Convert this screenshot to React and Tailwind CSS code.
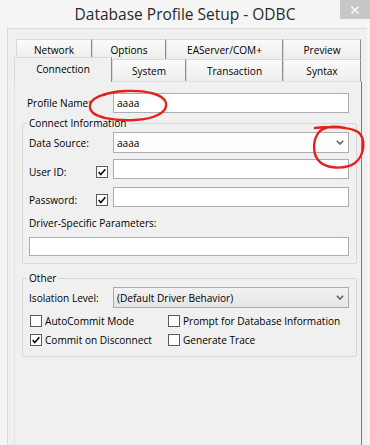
// Database Profile Setup — ODBC connection tab, Windows 8 dialog look.

const ROW1 = [
  ['Network', 'w-[76px]'],
  ['Options', 'w-[74px]'],
  ['EAServer/COM+', 'w-[117px]'],
  ['Preview', 'w-[78px]'],
]

const ROW2 = [
  ['System', 'w-[74px]'],
  ['Transaction', 'w-[97px]'],
  ['Syntax', 'w-[78px]'],
]

function Tab({ label, width }) {
  return (
    <div
      className={`${width} flex h-full items-center justify-center border-l border-t border-[#d9d9d9] border-r border-r-[#8c8c8c] bg-gradient-to-b from-[#fbfbfb] to-[#ededed]`}
    >
      {label}
    </div>
  )
}

function Check({ checked }) {
  return (
    <span className="flex h-[12px] w-[12px] flex-shrink-0 items-center justify-center border border-[#5a5a5a] bg-white">
      {checked && (
        <svg viewBox="0 0 12 12" className="h-[10px] w-[10px]" fill="none">
          <path d="M2 6.2 L4.6 9 L10 2.6" stroke="#111" strokeWidth="2" />
        </svg>
      )}
    </span>
  )
}

function Chevron() {
  return (
    <svg viewBox="0 0 8 5" className="h-[5px] w-[8px]" fill="none">
      <path d="M0.8 0.8 L4 4 L7.2 0.8" stroke="#5a5a5a" strokeWidth="1.5" />
    </svg>
  )
}

function TextBox({ value, className = 'w-[236px] h-[20px]' }) {
  return (
    <div className={`${className} flex items-center border border-[#abadb3] bg-white pl-[3px]`}>
      {value}
    </div>
  )
}

function Combo({ value, gray }) {
  return (
    <div
      className={`flex h-[21px] w-[236px] items-center justify-between border border-[#acacac] pl-[3px] pr-[4px] ${
        gray ? 'bg-gradient-to-b from-[#f2f2f2] to-[#e5e5e5]' : 'bg-[#fdfdfd]'
      }`}
    >
      <span>{value}</span>
      <Chevron />
    </div>
  )
}

function CheckLabel({ checked, children, className = '' }) {
  return (
    <div className={`flex items-center gap-[3px] ${className}`}>
      <Check checked={checked} />
      <span>{children}</span>
    </div>
  )
}

export default function App() {
  return (
    <div className="relative h-[445px] w-[370px] overflow-hidden bg-[#f5f5f5] font-['Open_Sans','Noto_Sans',sans-serif] text-[10.1px] leading-[14px] text-black">
      {/* title bar */}
      <div className="relative flex h-[28px] items-center justify-center">
        <span className="text-[15.5px] leading-[20px] text-[#2a2a2a]">Database Profile Setup - ODBC</span>
        <div className="absolute right-0 top-0 flex h-[19px] w-[30px] items-center justify-center bg-[#c7c7c7]">
          <svg viewBox="0 0 8 8" className="h-[8px] w-[8px]" fill="none">
            <path d="M0.5 0.5 L7.5 7.5 M7.5 0.5 L0.5 7.5" stroke="#fff" strokeWidth="1.4" />
          </svg>
        </div>
      </div>

      {/* client area */}
      <div className="ml-[7px] mr-[3px] h-[417px] border-l border-t border-[#dadada] bg-[#f0f0f0] pt-[10px]">
        <div className="ml-[8px] flex h-[20px]">
          {ROW1.map(([label, w]) => (
            <Tab key={label} label={label} width={w} />
          ))}
        </div>
        <div className="ml-[6px] flex h-[22px] items-end">
          <div className="relative z-10 -mb-px flex h-[25px] w-[98px] items-center justify-center border-l border-t border-[#d9d9d9] border-r border-r-[#8c8c8c] bg-[#f0f0f0] pb-[2px]">
            Connection
          </div>
          {ROW2.map(([label, w]) => (
            <Tab key={label} label={label} width={w} />
          ))}
        </div>

        {/* tab page */}
        <div className="ml-[6px] h-[370px] w-[348px] border-l border-t border-[#e2e2e2] border-r border-r-[#7c7c7c] bg-[#f0f0f0] pt-[11px]">
          <div className="flex h-[20px] items-center">
            <span className="w-[98px] pl-[12px]">Profile Name:</span>
            <TextBox value="aaaa" />
          </div>

          <fieldset className="ml-[7px] mt-[3px] w-[335px] rounded-[2px] border border-[#d8d8d8] pb-[7px]">
            <legend className="ml-[4px] px-[2px] leading-[14px]">Connect Information</legend>
            <div className="mt-[2px] flex h-[21px] items-center">
              <span className="w-[90px] pl-[6px]">Data Source:</span>
              <Combo value="aaaa" />
            </div>
            <div className="mt-[6px] flex h-[20px] items-center">
              <div className="mt-[6px] flex w-[90px] items-center pl-[6px]">
                <span className="w-[67px]">User ID:</span>
                <Check checked />
              </div>
              <TextBox />
            </div>
            <div className="mt-[8px] flex h-[20px] items-center">
              <div className="mt-[6px] flex w-[90px] items-center pl-[6px]">
                <span className="w-[67px]">Password:</span>
                <Check checked />
              </div>
              <TextBox />
            </div>
            <div className="mt-[9px] pl-[6px]">Driver-Specific Parameters:</div>
            <div className="ml-[6px] mt-[7px]">
              <TextBox className="h-[19px] w-[320px]" />
            </div>
          </fieldset>

          <fieldset className="ml-[7px] mt-[7px] w-[335px] rounded-[2px] border border-[#d8d8d8] pb-[9px]">
            <legend className="ml-[4px] px-[2px] leading-[14px]">Other</legend>
            <div className="mt-[2px] flex h-[21px] items-center">
              <span className="w-[90px] pl-[6px]">Isolation Level:</span>
              <Combo value="(Default Driver Behavior)" gray />
            </div>
            <div className="ml-[7px] mt-[6px] flex h-[14px]">
              <CheckLabel className="w-[138px]">AutoCommit Mode</CheckLabel>
              <CheckLabel>Prompt for Database Information</CheckLabel>
            </div>
            <div className="ml-[7px] mt-[5px] flex h-[14px]">
              <CheckLabel checked className="w-[138px]">
                Commit on Disconnect
              </CheckLabel>
              <CheckLabel>Generate Trace</CheckLabel>
            </div>
          </fieldset>
        </div>
      </div>

      {/* red pen marks drawn over the screenshot */}
      <svg
        className="pointer-events-none absolute left-0 top-0 h-[445px] w-[370px]"
        viewBox="0 0 370 445"
        fill="none"
      >
        <path
          d="M127 91 C 105 92, 88 98, 90 108 C 92 118, 115 121, 135 120 C 155 119, 168 112, 166 103 C 164 94, 145 90, 125 91 C 115 91.5, 108 93, 104 95"
          stroke="#e3221c"
          strokeWidth="2.4"
          strokeLinecap="round"
        />
        <path
          d="M315 128 C 330 126, 350 127, 358 132 C 366 138, 365 155, 355 163 C 345 170, 325 169, 318 160 C 312 152, 313 138, 320 131 C 325 127, 335 126, 345 128"
          stroke="#e3221c"
          strokeWidth="2.4"
          strokeLinecap="round"
        />
      </svg>
    </div>
  )
}
